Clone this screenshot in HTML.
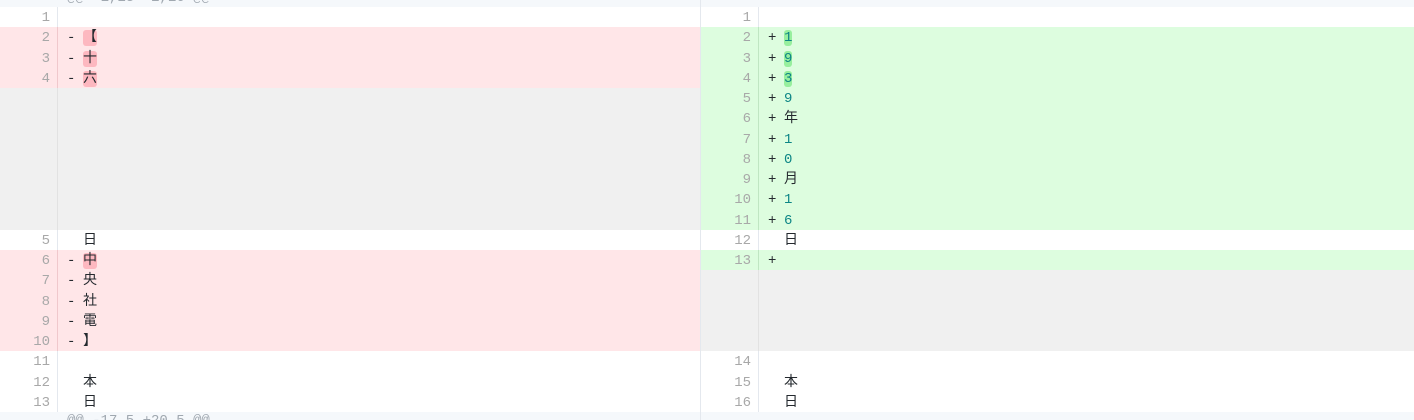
<!DOCTYPE html>
<html><head><meta charset="utf-8"><style>
*{margin:0;padding:0;box-sizing:border-box}
body{width:1414px;height:420px;overflow:hidden;background:#fff;font-family:"Liberation Mono","Noto Sans CJK JP",monospace;font-size:14px;color:#24292e;position:relative}
.pane{position:absolute;top:0;height:420px}
#L{left:0;width:700px}
#R{left:700px;width:714px;border-left:1px solid #e4e8ee}
.hdr{height:7px;background:#f5f8fb;position:relative;overflow:hidden}
.hdr span{position:absolute;left:67px;top:-10px;color:#a0a8b0}
.bhdr{position:absolute;top:412px;left:0;right:0;height:8px;background:#f5f8fb;overflow:hidden}
.bhdr span{position:absolute;left:67px;top:1px;color:#a0a8b0}
.row{height:20.26px;display:flex;line-height:22px;white-space:pre}
.n{width:58px;text-align:right;padding-right:7px;color:#a8a8a8;border-right:1px solid #e4e8ee;flex:none}
.s{width:25px;padding-left:9px;flex:none}
.c{flex:1}
.d{background:#ffe6e8}.d .n{border-right-color:#f0c8cc}
.a{background:#ddfddf}.a .n{border-right-color:#bfe6c2}
.e{background:#f0f0f0}.e .n{border-right-color:#e2e2e2}
.hd{background:#fdb8c0;border-radius:3px}
.ha{background:#97ef9e;border-radius:3px}
.num{color:#0c8585}
</style></head><body>
<div class="pane" id="L">
<div class="hdr"><span>@@ -1,13 +1,16 @@</span></div>
<div class="row"><div class="n">1</div><div class="s"></div><div class="c"></div></div>
<div class="row d"><div class="n">2</div><div class="s">-</div><div class="c"><span class="hd">【</span></div></div>
<div class="row d"><div class="n">3</div><div class="s">-</div><div class="c"><span class="hd">十</span></div></div>
<div class="row d"><div class="n">4</div><div class="s">-</div><div class="c"><span class="hd">六</span></div></div>
<div class="row e"><div class="n"></div><div class="s"></div><div class="c"></div></div>
<div class="row e"><div class="n"></div><div class="s"></div><div class="c"></div></div>
<div class="row e"><div class="n"></div><div class="s"></div><div class="c"></div></div>
<div class="row e"><div class="n"></div><div class="s"></div><div class="c"></div></div>
<div class="row e"><div class="n"></div><div class="s"></div><div class="c"></div></div>
<div class="row e"><div class="n"></div><div class="s"></div><div class="c"></div></div>
<div class="row e"><div class="n"></div><div class="s"></div><div class="c"></div></div>
<div class="row"><div class="n">5</div><div class="s"></div><div class="c">日</div></div>
<div class="row d"><div class="n">6</div><div class="s">-</div><div class="c"><span class="hd">中</span></div></div>
<div class="row d"><div class="n">7</div><div class="s">-</div><div class="c">央</div></div>
<div class="row d"><div class="n">8</div><div class="s">-</div><div class="c">社</div></div>
<div class="row d"><div class="n">9</div><div class="s">-</div><div class="c">電</div></div>
<div class="row d"><div class="n">10</div><div class="s">-</div><div class="c">】</div></div>
<div class="row"><div class="n">11</div><div class="s"></div><div class="c"></div></div>
<div class="row"><div class="n">12</div><div class="s"></div><div class="c">本</div></div>
<div class="row"><div class="n">13</div><div class="s"></div><div class="c">日</div></div>
<div class="bhdr"><span>@@ -17,5 +20,5 @@</span></div>
</div>
<div class="pane" id="R">
<div class="hdr"></div>
<div class="row"><div class="n">1</div><div class="s"></div><div class="c"></div></div>
<div class="row a"><div class="n">2</div><div class="s">+</div><div class="c num"><span class="ha">1</span></div></div>
<div class="row a"><div class="n">3</div><div class="s">+</div><div class="c num"><span class="ha">9</span></div></div>
<div class="row a"><div class="n">4</div><div class="s">+</div><div class="c num"><span class="ha">3</span></div></div>
<div class="row a"><div class="n">5</div><div class="s">+</div><div class="c num">9</div></div>
<div class="row a"><div class="n">6</div><div class="s">+</div><div class="c">年</div></div>
<div class="row a"><div class="n">7</div><div class="s">+</div><div class="c num">1</div></div>
<div class="row a"><div class="n">8</div><div class="s">+</div><div class="c num">0</div></div>
<div class="row a"><div class="n">9</div><div class="s">+</div><div class="c">月</div></div>
<div class="row a"><div class="n">10</div><div class="s">+</div><div class="c num">1</div></div>
<div class="row a"><div class="n">11</div><div class="s">+</div><div class="c num">6</div></div>
<div class="row"><div class="n">12</div><div class="s"></div><div class="c">日</div></div>
<div class="row a"><div class="n">13</div><div class="s">+</div><div class="c"></div></div>
<div class="row e"><div class="n"></div><div class="s"></div><div class="c"></div></div>
<div class="row e"><div class="n"></div><div class="s"></div><div class="c"></div></div>
<div class="row e"><div class="n"></div><div class="s"></div><div class="c"></div></div>
<div class="row e"><div class="n"></div><div class="s"></div><div class="c"></div></div>
<div class="row"><div class="n">14</div><div class="s"></div><div class="c"></div></div>
<div class="row"><div class="n">15</div><div class="s"></div><div class="c">本</div></div>
<div class="row"><div class="n">16</div><div class="s"></div><div class="c">日</div></div>
<div class="bhdr"></div>
</div>
</body></html>
